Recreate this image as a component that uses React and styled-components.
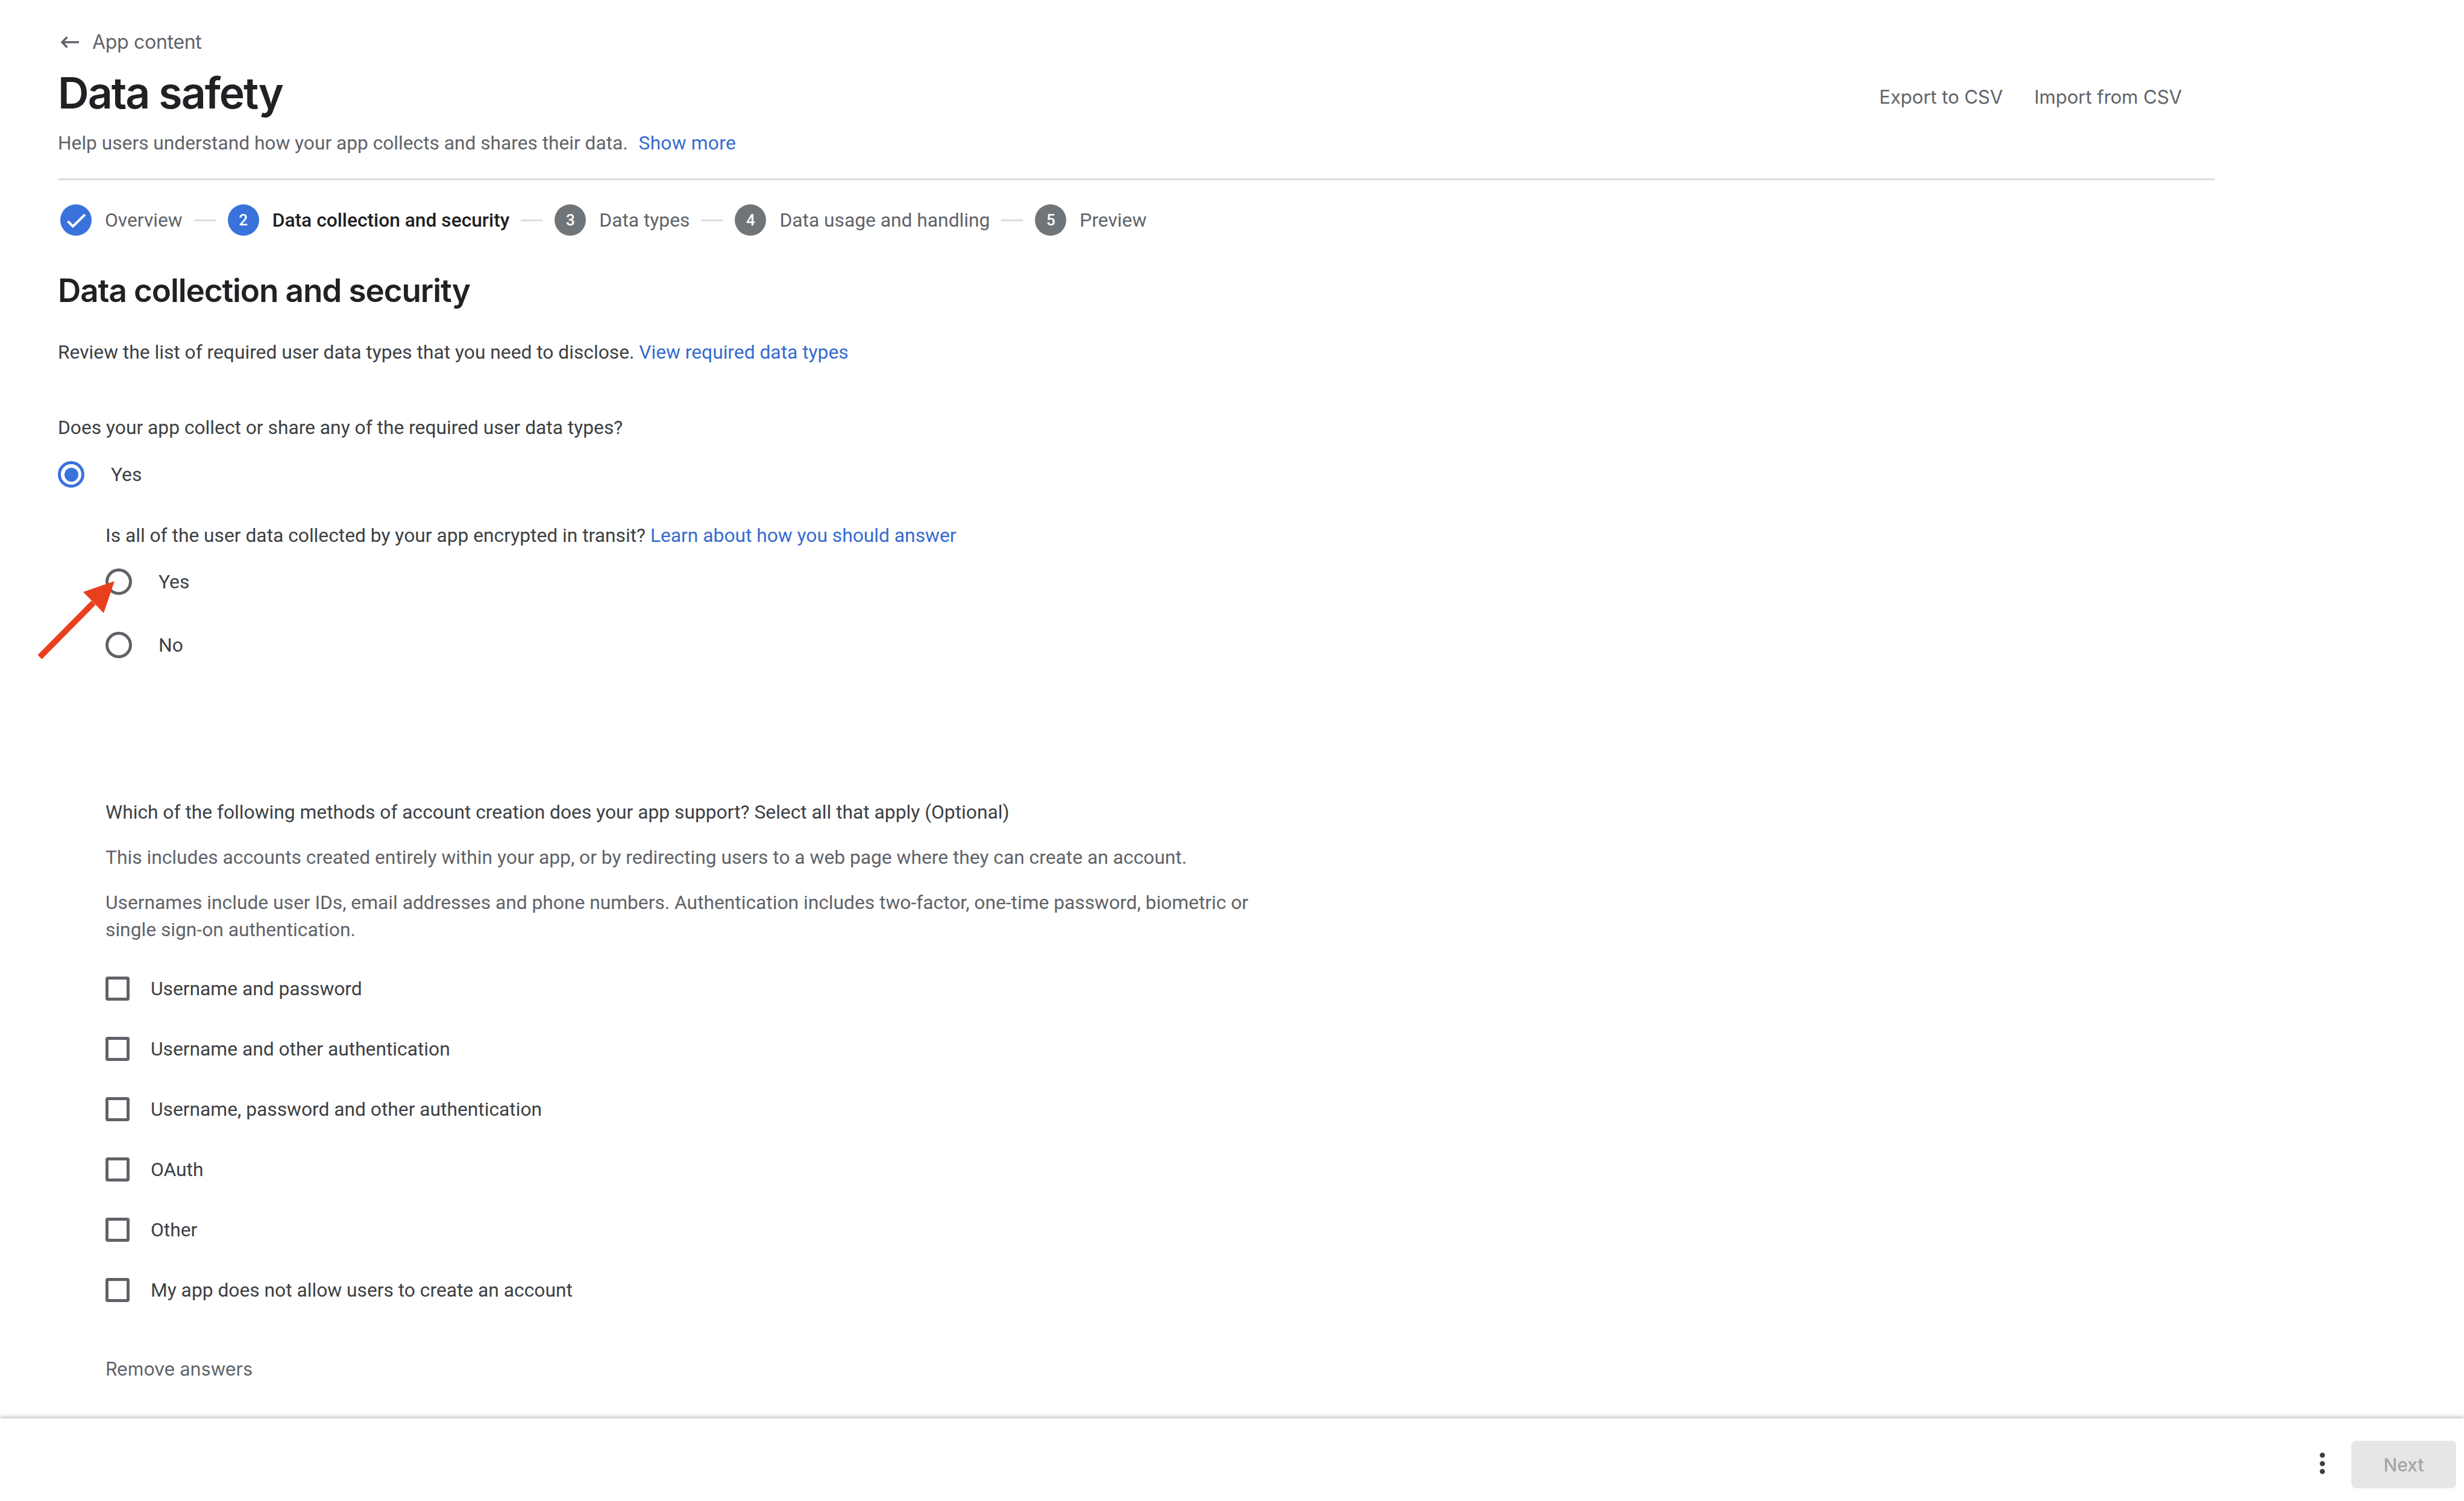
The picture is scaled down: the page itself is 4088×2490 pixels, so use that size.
import React from "react";
import styled, { createGlobalStyle } from "styled-components";

const Global = createGlobalStyle`
  html, body { margin: 0; padding: 0; background: #fff; }
  body { font-family: Roboto, "Liberation Sans", sans-serif; color: #3c4043; }
  * { box-sizing: border-box; }
`;
const display = `Inter, Roboto, sans-serif`;

const Page = styled.div`
  position: relative; height: 100vh; display: flex; flex-direction: column; overflow: hidden;
`;
const Main = styled.main`
  flex: 1; padding: 50px 414px 0 96px; min-height: 0;
`;
const Back = styled.div`
  display: flex; align-items: center; gap: 22px; height: 40px; padding-left: 4px;
  font: 400 32px/40px ${display}; letter-spacing: -0.3px; color: #5f6368;
`;
const BackArrow = styled.svg`
  width: 31px; height: 20px; display: block;
`;
const HeaderRow = styled.div`
  display: flex; align-items: center; justify-content: space-between;
  height: 80px; margin-top: 24px; padding-right: 54px;
`;
const Title = styled.h1`
  margin: 0; font: 600 71.5px/80px ${display}; letter-spacing: -2px; color: #202124;
`;
const Actions = styled.div`
  display: flex; gap: 52px; margin-top: 14px;
`;
const ActionLink = styled.span`
  font: 400 31.2px/40px ${display}; color: #5f6368; letter-spacing: -0.1px;
`;
const Sub = styled.p`
  margin: 24px 0 0; font-size: 31.7px; line-height: 40px; color: #5f6368;
`;
const A = styled.span`
  color: #356bd0;
  margin-left: ${p => p.$gap || 0}px;
  letter-spacing: ${p => p.$gap ? "0.25px" : "0"};
`;
const Divider = styled.div`
  height: 3px; background: #dadce0; margin-top: 38px;
`;
const Stepper = styled.ol`
  display: flex; align-items: center; list-style: none; height: 56px; margin: 38px 0 0; padding: 0 0 0 4px;
`;
const Step = styled.li`
  display: flex; align-items: center; gap: 22px; font-size: 31.75px;
  font-weight: ${p => p.$active ? 500 : 400};
  color: ${p => p.$active ? "#202124" : "#5f6368"};
`;
const Bubble = styled.span`
  width: 52px; height: 52px; border-radius: 50%; display: flex; align-items: center; justify-content: center;
  background: ${p => p.$on ? "#3a72dc" : "#70757a"}; color: #fff; font-size: 26px; font-weight: 500;
`;
const CheckMark = styled.svg`
  width: 52px; height: 52px; display: block;
`;
const Connector = styled.span`
  width: 36px; height: 3px; background: #dadce0; margin: 0 20px 0 19px;
`;
const H2 = styled.h2`
  margin: 59px 0 0; font: 600 53px/60px ${display}; letter-spacing: -1.1px; color: #202124;
`;
const Line = styled.p`
  margin: ${p => p.$mt}px 0 0; font-size: 31.75px; line-height: 40px;
  color: ${p => p.$muted ? "#5f6368" : "#3c4043"};
`;
const Para = styled.p`
  margin: 32px 0 0; width: 1920px; font-size: 31.75px; line-height: 45px; color: #5f6368;
`;
const Nested = styled.div`
  padding-left: 79px;
`;
const RadioRow = styled.label`
  display: flex; align-items: center; gap: 44px; height: 44px; margin-top: ${p => p.$mt}px;
  font-size: 31.75px; color: #3c4043;
`;
const Radio = styled.span`
  width: 44px; height: 44px; border-radius: 50%; flex: none; display: flex; align-items: center; justify-content: center;
  border: 5px solid ${p => p.$on ? "#3a72dc" : "#5f6368"};
  &::after { content: ""; width: 23px; height: 23px; border-radius: 50%; background: ${p => p.$on ? "#3a72dc" : "transparent"}; }
`;
const CheckList = styled.div`
  display: flex; flex-direction: column; gap: 60px; margin-top: 55px;
`;
const CheckRow = styled.label`
  display: flex; align-items: center; gap: 35px; height: 40px; font-size: 31.75px; color: #3c4043;
`;
const Box = styled.span`
  width: 40px; height: 40px; border: 5px solid #5f6368; border-radius: 4px; flex: none;
`;
const Remove = styled.div`
  margin-top: 91px; font: 400 30.5px/40px ${display}; letter-spacing: -0.1px; color: #5f6368;
`;
const Footer = styled.footer`
  height: 137px; flex: none; background: #fff; display: flex; align-items: flex-start; justify-content: flex-end;
  gap: 43px; padding: 37px 13px 0 0; box-shadow: 0 -3px 6px rgba(60,64,67,.3);
  position: relative;
`;
const Kebab = styled.svg`
  width: 10px; height: 44px; display: block; margin-top: 16px;
`;
const NextBtn = styled.button`
  width: 174px; height: 79px; border: 0; border-radius: 8px; background: #e6e6e6; color: #a5a5a5;
  font: 500 30px ${display}; padding: 0;
`;
const Annotation = styled.svg`
  position: absolute; left: 55px; top: 955px; width: 150px; height: 150px; pointer-events: none;
`;

const steps = [
  { n: 1, label: "Overview", done: true },
  { n: 2, label: "Data collection and security", active: true },
  { n: 3, label: "Data types" },
  { n: 4, label: "Data usage and handling" },
  { n: 5, label: "Preview" },
];
const checks = [
  "Username and password",
  "Username and other authentication",
  "Username, password and other authentication",
  "OAuth",
  "Other",
  "My app does not allow users to create an account",
];

export default function App() {
  return (
    <Page>
      <Global />
      <Main>
        <Back>
          <BackArrow viewBox="0 0 31 20" fill="none" stroke="#5f6368" strokeWidth="3.4">
            <path d="M31 10H3M11.5 1.5L3 10l8.5 8.5" />
          </BackArrow>
          <span>App content</span>
        </Back>
        <HeaderRow>
          <Title>Data safety</Title>
          <Actions>
            <ActionLink>Export to CSV</ActionLink>
            <ActionLink>Import from CSV</ActionLink>
          </Actions>
        </HeaderRow>
        <Sub>Help users understand how your app collects and shares their data. <A $gap={10}>Show more</A></Sub>
        <Divider />
        <Stepper>
          {steps.map((s, i) => (
            <React.Fragment key={s.n}>
              {i > 0 && <Connector />}
              <Step $active={s.active}>
                <Bubble $on={s.done || s.active}>
                  {s.done ? (
                    <CheckMark viewBox="0 0 52 52" fill="none" stroke="#fff" strokeWidth="4"><path d="M12.5 28L21 36.5 41 17" /></CheckMark>
                  ) : s.n}
                </Bubble>
                {s.label}
              </Step>
            </React.Fragment>
          ))}
        </Stepper>
        <H2>Data collection and security</H2>
        <Line $mt={53}>Review the list of required user data types that you need to disclose. <A>View required data types</A></Line>
        <Line $mt={85}>Does your app collect or share any of the required user data types?</Line>
        <RadioRow $mt={35}><Radio $on />Yes</RadioRow>
        <Nested>
          <Line $mt={60}>Is all of the user data collected by your app encrypted in transit? <A>Learn about how you should answer</A></Line>
          <RadioRow $mt={34}><Radio />Yes</RadioRow>
          <RadioRow $mt={61}><Radio />No</RadioRow>
          <Line $mt={236}>Which of the following methods of account creation does your app support? Select all that apply (Optional)</Line>
          <Line $mt={35} $muted>This includes accounts created entirely within your app, or by redirecting users to a web page where they can create an account.</Line>
          <Para>Usernames include user IDs, email addresses and phone numbers. Authentication includes two-factor, one-time password, biometric or single sign-on authentication.</Para>
          <CheckList>
            {checks.map(c => <CheckRow key={c}><Box />{c}</CheckRow>)}
          </CheckList>
          <Remove>Remove answers</Remove>
        </Nested>
      </Main>
      <Footer>
        <Kebab viewBox="0 0 10 44"><circle cx="5" cy="8" r="4.3" fill="#3c4043" /><circle cx="5" cy="22" r="4.3" fill="#3c4043" /><circle cx="5" cy="35" r="4.3" fill="#3c4043" /></Kebab>
        <NextBtn disabled>Next</NextBtn>
      </Footer>
      <Annotation viewBox="55 955 150 150">
        <path d="M62.5 1086.5L69.5 1093.5L158.5 1003.5L151.5 996.5Z" fill="#e8401f" />
        <path d="M190 964L138 982L172 1017Z" fill="#e8401f" />
      </Annotation>
    </Page>
  );
}
